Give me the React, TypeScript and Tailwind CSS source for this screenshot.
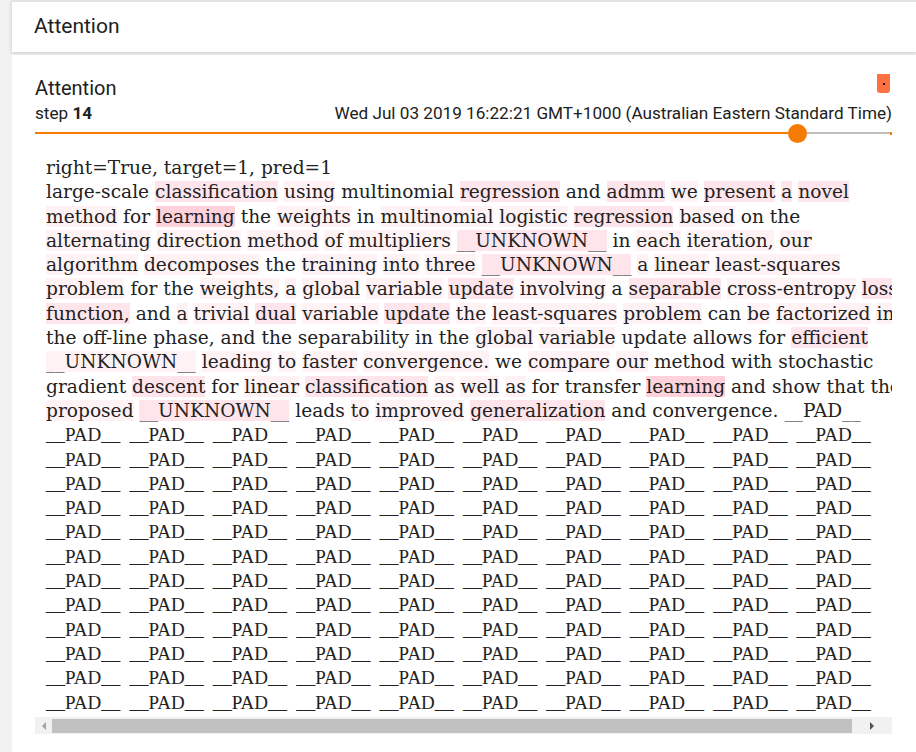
const lines: string[] = [
  'large-scale:0 classification:2 using:1 multinomial:0 regression:2 and:0 admm:2 we:1 present:2 a:2 novel:2',
  'method:1 for:0 learning:3 the:0 weights:1 in:0 multinomial:1 logistic:1 regression:2 based:1 on:0 the:0',
  'alternating:1 direction:1 method:1 of:1 multipliers:1 __UNKNOWN__:2 in:0 each:1 iteration,:1 our:1',
  'algorithm:1 decomposes:1 the:0 training:1 into:1 three:1 __UNKNOWN__:2 a:1 linear:1 least-squares:1',
  'problem:1 for:0 the:0 weights,:1 a:1 global:1 variable:1 update:2 involving:1 a:0 separable:2 cross-entropy:1 loss:2',
  'function,:2 and:0 a:1 trivial:1 dual:2 variable:1 update:2 the:1 least-squares:1 problem:1 can:0 be:1 factorized:1 in:1',
  'the:0 off-line:0 phase,:0 and:0 the:0 separability:0 in:0 the:0 global:1 variable:1 update:0 allows:0 for:0 efficient:2',
  '__UNKNOWN__:1 leading:1 to:1 faster:1 convergence.:1 we:0 compare:1 our:1 method:0 with:0 stochastic:0',
  'gradient:0 descent:2 for:0 linear:1 classification:2 as:1 well:1 as:1 for:0 transfer:0 learning:3 and:0 show:0 that:0 the:0',
  'proposed:1 __UNKNOWN__:2 leads:0 to:1 improved:1 generalization:2 and:0 convergence.:0 __PAD__:0',
]

const alpha = [0, 0.07, 0.14, 0.25]

function Word({ token }: { token: string }) {
  const i = token.lastIndexOf(':')
  const word = token.slice(0, i)
  const level = Number(token.slice(i + 1))
  return <span style={{ backgroundColor: `rgba(250, 70, 110, ${alpha[level]})` }}>{word}</span>
}

const padRows = Array.from({ length: 12 })

export default function App() {
  return (
    <div className="min-h-[752px] bg-[#f2f2f2] pl-3 font-['Roboto',sans-serif] text-[#212121]">
      <div className="h-[52px] border-t-2 border-[#e3e3e3] bg-white shadow-[0_1px_4px_rgba(0,0,0,0.18)] flex items-center pl-[22px]">
        <h2 className="text-[21px]">Attention</h2>
      </div>

      <div className="mt-[3px] bg-white pl-[23px] pr-6 pt-[21px] h-[697px] overflow-hidden">
        <div className="flex justify-between items-start">
          <div className="text-[20px] leading-[24px]">Attention</div>
          <div className="-mt-[2px] mr-[2px] w-[13px] h-[19px] rounded-b-[3px] bg-[#ff7043] flex items-center justify-center">
            <div className="w-[2px] h-[2px] bg-black" />
          </div>
        </div>
        <div className="mt-[2px] flex justify-between text-[17.15px] leading-[22px]">
          <span>step <b className="font-bold">14</b></span>
          <span>Wed Jul 03 2019 16:22:21 GMT+1000 (Australian Eastern Standard Time)</span>
        </div>

        <div className="h-[18px] flex items-center">
          <div className="h-[2px] w-[753px] bg-[#f57c00]" />
          <div className="w-[19px] h-[19px] rounded-full bg-[#f57c00] shrink-0" />
          <div className="h-[2px] flex-1 bg-[#bdbdbd]" />
          <div className="h-[3px] w-[2px] bg-[#f57c00]" />
        </div>

        <div className="mt-[14px] h-[561px] overflow-hidden pl-[11px] text-[#222]">
          <div className="font-['DejaVu_Serif',serif] text-[18.6px] leading-[24.3px] whitespace-nowrap">
            <div>right=True, target=1, pred=1</div>
            {lines.map((line, li) => (
              <div key={li}>
                {line.split(' ').map((t, wi) => (
                  <span key={wi}>
                    {wi > 0 && ' '}
                    <Word token={t} />
                  </span>
                ))}
              </div>
            ))}
          </div>
          <div className="font-['Liberation_Serif',serif] text-[19px] leading-[24.3px] whitespace-nowrap">
            {padRows.map((_, i) => (
              <div key={i} className="flex">
                {Array.from({ length: 10 }).map((_, j) => (
                  <span key={j} className="w-[83.4px] shrink-0">__PAD__</span>
                ))}
              </div>
            ))}
          </div>
        </div>

        <div className="h-[17px] bg-[#f1f1f1] flex items-center">
          <div className="w-[17px] flex justify-center">
            <div className="w-0 h-0 border-y-[4px] border-y-transparent border-r-[4px] border-r-[#a3a3a3]" />
          </div>
          <div className="h-[14px] w-[800px] bg-[#c1c1c1]" />
          <div className="flex-1 flex justify-center">
            <div className="w-0 h-0 border-y-[4px] border-y-transparent border-l-[4px] border-l-[#505050]" />
          </div>
        </div>
      </div>
    </div>
  )
}
